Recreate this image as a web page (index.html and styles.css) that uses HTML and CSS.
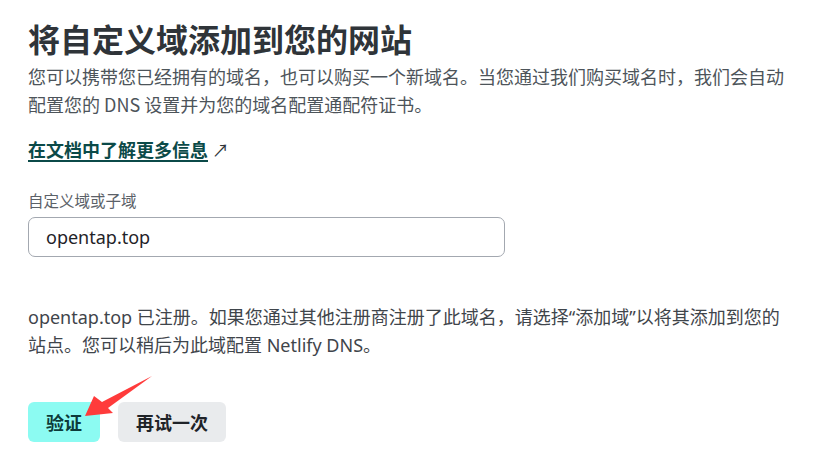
FILE: index.html
```html
<!DOCTYPE html>
<html lang="zh-CN">
<head>
<meta charset="utf-8">
<link rel="stylesheet" href="styles.css">
</head>
<body>
<main class="panel">
  <h1 class="title">将自定义域添加到您的网站</h1>
  <p class="lead">您可以携带您已经拥有的域名，也可以购买一个新域名。当您通过我们购买域名时，我们会自动配置您的 DNS 设置并为您的域名配置通配符证书。</p>
  <p class="doc"><a class="doc-link" href="#">在文档中了解更多信息</a> <span class="ext">↗</span></p>
  <label class="field-label" for="domain">自定义域或子域</label>
  <input class="field" id="domain" type="text" value="opentap.top">
  <p class="notice">opentap.top 已注册。如果您通过其他注册商注册了此域名，请选择“添加域”以将其添加到您的站点。您可以稍后为此域配置 Netlify DNS。</p>
  <div class="actions">
    <button class="btn btn-primary">验证</button>
    <button class="btn btn-secondary">再试一次</button>
  </div>
  <svg class="annot-arrow" width="80" height="50" viewBox="80 372 80 50" aria-hidden="true">
    <polygon points="85,416 94,396 102,402 152,376 108,408 113,413" fill="#ff3b3b"/>
  </svg>
</main>
</body>
</html>
```
FILE: styles.css
```css
html, body {
  margin: 0;
  padding: 0;
  background: #ffffff;
}
body {
  font-family: "Noto Sans CJK SC", "Noto Sans", sans-serif;
  color: #4d545a;
}
.panel {
  position: relative;
  width: 762px;
  padding: 18px 0 0 28px;
}
.title {
  margin: 0;
  font-size: 32px;
  line-height: 40px;
  font-weight: 700;
  color: #2f3439;
}
.lead {
  margin: 4px 0 0;
  font-size: 18px;
  line-height: 28px;
  color: #4d545a;
}
.doc {
  margin: 17px 0 0;
  font-size: 18px;
  line-height: 28px;
}
.doc-link {
  color: #0b4a48;
  font-weight: 700;
  text-decoration: underline;
  text-decoration-thickness: 2px;
  text-underline-offset: 3px;
}
.ext {
  color: #2f3439;
  font-size: 17px;
}
.field-label {
  display: block;
  margin-top: 24px;
  font-size: 15.5px;
  line-height: 24px;
  color: #5b6168;
}
.field {
  display: block;
  box-sizing: border-box;
  margin-top: 5px;
  width: 477px;
  height: 40px;
  padding: 0 17px;
  border: 1px solid #a3a8b0;
  border-radius: 7px;
  font-family: "Noto Sans", "Noto Sans CJK SC", sans-serif;
  font-size: 18px;
  color: #1f2328;
  background: #fff;
  outline: none;
}
.notice {
  margin: 46px 0 0;
  font-family: "Noto Sans", "Noto Sans CJK SC", sans-serif;
  font-size: 18px;
  line-height: 28px;
  color: #3f454b;
}
.actions {
  display: flex;
  gap: 18px;
  margin-top: 43px;
}
.btn {
  height: 40px;
  border: 0;
  border-radius: 6px;
  padding: 0 18px;
  font-family: "Noto Sans CJK SC", sans-serif;
  font-size: 18px;
  font-weight: 700;
  cursor: pointer;
}
.btn-primary {
  background: #8cfbf2;
  color: #0d3b3a;
}
.btn-secondary {
  background: #e9ebed;
  color: #1f2328;
}
.annot-arrow {
  position: absolute;
  left: 80px;
  top: 372px;
}
```
